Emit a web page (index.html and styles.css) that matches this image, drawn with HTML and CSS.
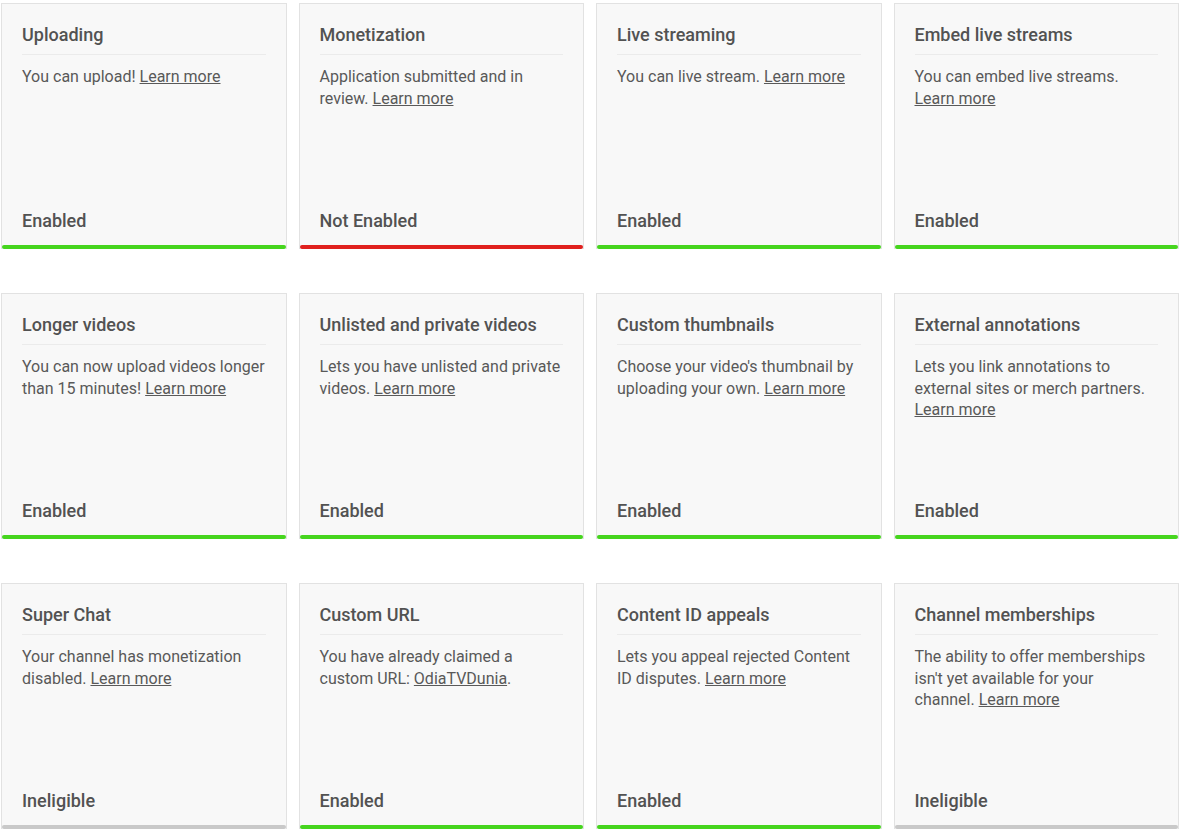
FILE: index.html
```html
<!DOCTYPE html>
<html>
<head>
<meta charset="utf-8">
<link rel="stylesheet" href="styles.css">
</head>
<body>
<div class="grid">
  <div class="card">
    <div class="title">Uploading</div>
    <div class="desc">You can upload! <a href="#">Learn more</a></div>
    <div class="status">Enabled</div>
    <div class="bar green"></div>
  </div>
  <div class="card">
    <div class="title">Monetization</div>
    <div class="desc">Application submitted and in review. <a href="#">Learn more</a></div>
    <div class="status">Not Enabled</div>
    <div class="bar red"></div>
  </div>
  <div class="card">
    <div class="title">Live streaming</div>
    <div class="desc">You can live stream. <a href="#">Learn more</a></div>
    <div class="status">Enabled</div>
    <div class="bar green"></div>
  </div>
  <div class="card">
    <div class="title">Embed live streams</div>
    <div class="desc">You can embed live streams. <a href="#">Learn more</a></div>
    <div class="status">Enabled</div>
    <div class="bar green"></div>
  </div>

  <div class="card">
    <div class="title">Longer videos</div>
    <div class="desc">You can now upload videos longer than 15 minutes! <a href="#">Learn more</a></div>
    <div class="status">Enabled</div>
    <div class="bar green"></div>
  </div>
  <div class="card">
    <div class="title">Unlisted and private videos</div>
    <div class="desc">Lets you have unlisted and private videos. <a href="#">Learn more</a></div>
    <div class="status">Enabled</div>
    <div class="bar green"></div>
  </div>
  <div class="card">
    <div class="title">Custom thumbnails</div>
    <div class="desc">Choose your video's thumbnail by uploading your own. <a href="#">Learn more</a></div>
    <div class="status">Enabled</div>
    <div class="bar green"></div>
  </div>
  <div class="card">
    <div class="title">External annotations</div>
    <div class="desc">Lets you link annotations to external sites or merch partners. <a href="#">Learn more</a></div>
    <div class="status">Enabled</div>
    <div class="bar green"></div>
  </div>

  <div class="card">
    <div class="title">Super Chat</div>
    <div class="desc">Your channel has monetization disabled. <a href="#">Learn more</a></div>
    <div class="status">Ineligible</div>
    <div class="bar grey"></div>
  </div>
  <div class="card">
    <div class="title">Custom URL</div>
    <div class="desc">You have already claimed a custom URL: <a href="#">OdiaTVDunia</a>.</div>
    <div class="status">Enabled</div>
    <div class="bar green"></div>
  </div>
  <div class="card">
    <div class="title">Content ID appeals</div>
    <div class="desc">Lets you appeal rejected Content ID disputes. <a href="#">Learn more</a></div>
    <div class="status">Enabled</div>
    <div class="bar green"></div>
  </div>
  <div class="card">
    <div class="title">Channel memberships</div>
    <div class="desc">The ability to offer memberships isn't yet available for your<br>channel. <a href="#">Learn more</a></div>
    <div class="status">Ineligible</div>
    <div class="bar grey"></div>
  </div>
</div>
</body>
</html>
```

FILE: styles.css
```css
html, body {
  margin: 0;
  padding: 0;
  background: #ffffff;
}

body {
  font-family: Roboto, "Liberation Sans", Arial, sans-serif;
  color: #555555;
}

.grid {
  display: grid;
  grid-template-columns: repeat(4, 285.5px);
  grid-auto-rows: 246px;
  column-gap: 12px;
  row-gap: 44px;
  padding: 3px 0 0 1px;
}

.card {
  box-sizing: border-box;
  display: flex;
  flex-direction: column;
  background: #f8f8f8;
  border: 1px solid #e2e2e2;
  border-bottom: 0;
  padding: 19px 0 0 0;
}

.title {
  margin: 0 20px;
  font-size: 18px;
  font-weight: 500;
  line-height: 24px;
  color: #525252;
  padding-bottom: 7px;
  border-bottom: 1px solid #ebebeb;
}

.desc {
  flex: 1;
  margin: 11px 20px 0 20px;
  font-size: 16px;
  line-height: 21.5px;
  color: #595959;
}

.desc a {
  color: #595959;
  text-decoration: underline;
}

.status {
  margin: 0 20px;
  font-size: 18px;
  font-weight: 500;
  line-height: 24px;
  color: #525252;
  padding-bottom: 12px;
}

.bar {
  height: 4px;
  border-radius: 2px;
}

.green { background: #46d51e; }
.red { background: #e0201e; }
.grey { background: #c9c9c9; }
```
